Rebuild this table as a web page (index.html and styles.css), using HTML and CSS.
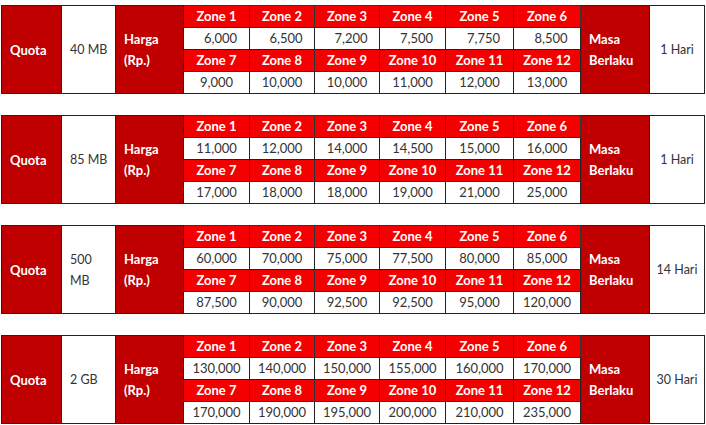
FILE: index.html
```html
<!DOCTYPE html>
<html>
<head>
<meta charset="utf-8">
<link rel="stylesheet" href="styles.css">
</head>
<body>
<div class="list">
  <table class="pkg">
    <colgroup><col class="c1"><col class="c2"><col class="c3"><col class="z66"><col class="z65"><col class="z65"><col class="z66"><col class="z68"><col class="z67"><col class="c4"><col class="c5"></colgroup>
    <tr><td class="lbl q" rowspan="4">Quota</td><td class="val" rowspan="4">40 MB</td><td class="lbl" rowspan="4">Harga<br>(Rp.)</td><th>Zone 1</th><th>Zone 2</th><th>Zone 3</th><th>Zone 4</th><th>Zone 5</th><th>Zone 6</th><td class="lbl" rowspan="4">Masa<br>Berlaku</td><td class="val ctr" rowspan="4">1 Hari</td></tr>
    <tr class="shift"><td class="num">6,000</td><td class="num">6,500</td><td class="num">7,200</td><td class="num">7,500</td><td class="num">7,750</td><td class="num">8,500</td></tr>
    <tr><th>Zone 7</th><th>Zone 8</th><th>Zone 9</th><th>Zone 10</th><th>Zone 11</th><th>Zone 12</th></tr>
    <tr><td class="num">9,000</td><td class="num">10,000</td><td class="num">10,000</td><td class="num">11,000</td><td class="num">12,000</td><td class="num">13,000</td></tr>
  </table>
  <table class="pkg">
    <colgroup><col class="c1"><col class="c2"><col class="c3"><col class="z66"><col class="z65"><col class="z65"><col class="z66"><col class="z68"><col class="z67"><col class="c4"><col class="c5"></colgroup>
    <tr><td class="lbl q" rowspan="4">Quota</td><td class="val" rowspan="4">85 MB</td><td class="lbl" rowspan="4">Harga<br>(Rp.)</td><th>Zone 1</th><th>Zone 2</th><th>Zone 3</th><th>Zone 4</th><th>Zone 5</th><th>Zone 6</th><td class="lbl" rowspan="4">Masa<br>Berlaku</td><td class="val ctr" rowspan="4">1 Hari</td></tr>
    <tr><td class="num">11,000</td><td class="num">12,000</td><td class="num">14,000</td><td class="num">14,500</td><td class="num">15,000</td><td class="num">16,000</td></tr>
    <tr><th>Zone 7</th><th>Zone 8</th><th>Zone 9</th><th>Zone 10</th><th>Zone 11</th><th>Zone 12</th></tr>
    <tr><td class="num">17,000</td><td class="num">18,000</td><td class="num">18,000</td><td class="num">19,000</td><td class="num">21,000</td><td class="num">25,000</td></tr>
  </table>
  <table class="pkg">
    <colgroup><col class="c1"><col class="c2"><col class="c3"><col class="z66"><col class="z65"><col class="z65"><col class="z66"><col class="z68"><col class="z67"><col class="c4"><col class="c5"></colgroup>
    <tr><td class="lbl q" rowspan="4">Quota</td><td class="val" rowspan="4">500<br>MB</td><td class="lbl" rowspan="4">Harga<br>(Rp.)</td><th>Zone 1</th><th>Zone 2</th><th>Zone 3</th><th>Zone 4</th><th>Zone 5</th><th>Zone 6</th><td class="lbl" rowspan="4">Masa<br>Berlaku</td><td class="val ctr" rowspan="4">14 Hari</td></tr>
    <tr><td class="num">60,000</td><td class="num">70,000</td><td class="num">75,000</td><td class="num">77,500</td><td class="num">80,000</td><td class="num">85,000</td></tr>
    <tr><th>Zone 7</th><th>Zone 8</th><th>Zone 9</th><th>Zone 10</th><th>Zone 11</th><th>Zone 12</th></tr>
    <tr><td class="num">87,500</td><td class="num">90,000</td><td class="num">92,500</td><td class="num">92,500</td><td class="num">95,000</td><td class="num">120,000</td></tr>
  </table>
  <table class="pkg">
    <colgroup><col class="c1"><col class="c2"><col class="c3"><col class="z66"><col class="z65"><col class="z65"><col class="z66"><col class="z68"><col class="z67"><col class="c4"><col class="c5"></colgroup>
    <tr><td class="lbl q" rowspan="4">Quota</td><td class="val" rowspan="4">2 GB</td><td class="lbl" rowspan="4">Harga<br>(Rp.)</td><th>Zone 1</th><th>Zone 2</th><th>Zone 3</th><th>Zone 4</th><th>Zone 5</th><th>Zone 6</th><td class="lbl" rowspan="4">Masa<br>Berlaku</td><td class="val ctr" rowspan="4">30 Hari</td></tr>
    <tr><td class="num">130,000</td><td class="num">140,000</td><td class="num">150,000</td><td class="num">155,000</td><td class="num">160,000</td><td class="num">170,000</td></tr>
    <tr><th>Zone 7</th><th>Zone 8</th><th>Zone 9</th><th>Zone 10</th><th>Zone 11</th><th>Zone 12</th></tr>
    <tr><td class="num">170,000</td><td class="num">190,000</td><td class="num">195,000</td><td class="num">200,000</td><td class="num">210,000</td><td class="num">235,000</td></tr>
  </table>
</div>
</body>
</html>
```
FILE: styles.css
```css
html, body {
  margin: 0;
  padding: 0;
  background: #ffffff;
}
body {
  font-family: Lato, "Open Sans", sans-serif;
  font-size: 13px;
  color: #333333;
}
.list {
  display: flex;
  flex-direction: column;
  gap: 21px;
  padding: 5px 0 0 1px;
}
.pkg {
  border-collapse: collapse;
  table-layout: fixed;
  width: 704px;
}
.c1 { width: 60px; }
.c2 { width: 54px; }
.c3 { width: 68px; }
.z66 { width: 66px; }
.z65 { width: 65px; }
.z68 { width: 68px; }
.z67 { width: 67px; }
.c4 { width: 69px; }
.c5 { width: 55px; }
.pkg td, .pkg th {
  border: 1px solid #222222;
  height: 21px;
  padding: 0;
  line-height: 21px;
}
.pkg th {
  background: #f50000;
  color: #ffffff;
  font-weight: 700;
  text-align: center;
  border-color: #333333;
}
.lbl {
  background: #c00000;
  color: #ffffff;
  font-weight: 700;
  padding: 0 8px !important;
  vertical-align: middle;
  line-height: 21px;
}
.lbl.q {
  padding-top: 2px !important;
}
.val {
  background: #ffffff;
  padding: 0 4px 0 8px !important;
  vertical-align: middle;
  white-space: nowrap;
  font-size: 12.5px;
}
.val.ctr {
  text-align: center;
  padding: 0 2px !important;
}
.num {
  text-align: center;
  background: #ffffff;
}
.shift .num {
  padding-left: 8px;
}
```
